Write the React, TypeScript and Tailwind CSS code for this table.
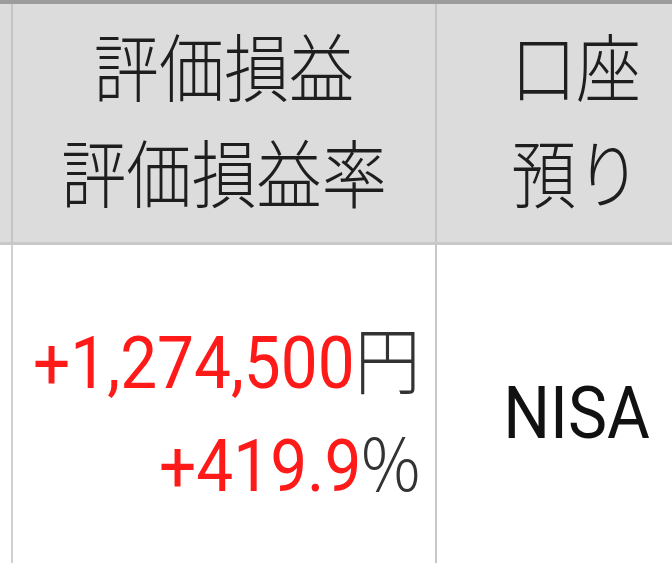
import React from "react";

const cjk = '"Noto Sans CJK JP", "Noto Sans", sans-serif';
const latin = 'Roboto, "Noto Sans CJK JP", sans-serif';

export default function App() {
  return (
    <div className="w-[672px] h-[563px] overflow-hidden bg-white">
      <div className="w-[720px] border-t-4 border-[#9c9c9c]">
        {/* header row */}
        <div className="flex h-[241px] bg-[#dcdcdc] border-b-[3px] border-[#c8c8c8]">
          <div className="w-[13px] shrink-0 border-r-2 border-[#c4c4c4]" />
          <div
            className="w-[424px] shrink-0 border-r-2 border-[#c4c4c4] flex flex-col items-center justify-center pb-[12px] text-[74px] leading-[106px] font-light text-[#1e1e1e]"
            style={{ fontFamily: cjk }}
          >
            <span className="block h-[106px] scale-x-[0.88] origin-center whitespace-nowrap">評価損益</span>
            <span className="block h-[106px] scale-x-[0.88] origin-center whitespace-nowrap">評価損益率</span>
          </div>
          <div
            className="w-[278px] shrink-0 flex flex-col items-center justify-center pb-[12px] text-[74px] leading-[106px] font-light text-[#1e1e1e]"
            style={{ fontFamily: cjk }}
          >
            <span className="block h-[106px] scale-x-[0.88] origin-center whitespace-nowrap">口座</span>
            <span className="block h-[106px] scale-x-[0.88] origin-center whitespace-nowrap">預り</span>
          </div>
        </div>
        {/* body row */}
        <div className="flex h-[336px] bg-white">
          <div className="w-[13px] shrink-0 border-r-2 border-[#d0d0d0]" />
          <div className="w-[424px] shrink-0 border-r-2 border-[#c8c8c8] flex flex-col items-end justify-center pr-[15px] pb-[10px] text-[73px] leading-[103px]">
            <span className="block h-[103px] scale-x-[0.9] origin-right whitespace-nowrap">
              <span className="text-[#ff1a1a]" style={{ fontFamily: latin }}>+1,274,500</span>
              <span className="text-[#333] font-light" style={{ fontFamily: cjk }}>円</span>
            </span>
            <span className="block h-[103px] scale-x-[0.9] origin-right whitespace-nowrap">
              <span className="text-[#ff1a1a]" style={{ fontFamily: latin }}>+419.9</span>
              <span className="text-[#333] font-light" style={{ fontFamily: cjk }}>%</span>
            </span>
          </div>
          <div
            className="w-[278px] shrink-0 flex items-center justify-center text-[73px] leading-[105px] text-[#111]"
            style={{ fontFamily: latin }}
          >
            <span className="inline-block scale-x-[0.9] origin-center">NISA</span>
          </div>
        </div>
      </div>
    </div>
  );
}
